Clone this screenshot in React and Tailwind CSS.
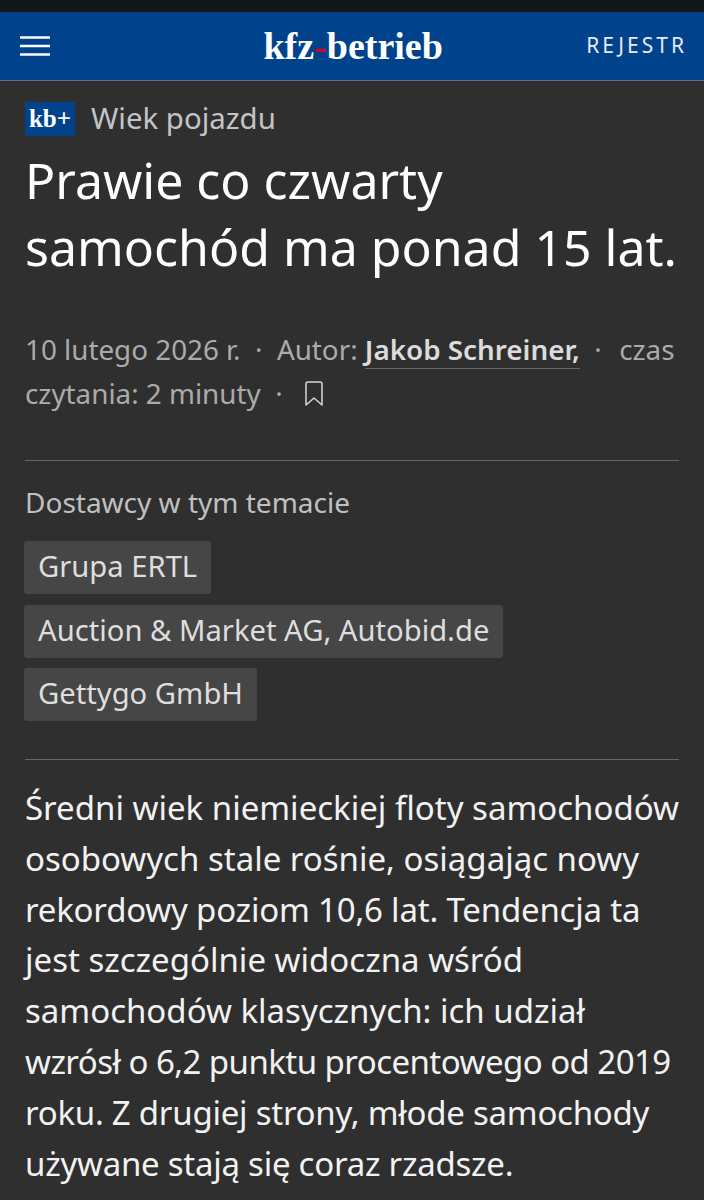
const lines = [
  ["Średni wiek niemieckiej floty samochodów", ""],
  ["osobowych stale rośnie, osiągając nowy", ""],
  ["rekordowy poziom 10,6 lat. Tendencja ta", "tracking-[-0.2px]"],
  ["jest szczególnie widoczna wśród", ""],
  ["samochodów klasycznych: ich udział", ""],
  ["wzrósł o 6,2 punktu procentowego od 2019", "tracking-[-0.55px]"],
  ["roku. Z drugiej strony, młode samochody", "tracking-[-0.25px]"],
  ["używane stają się coraz rzadsze.", "tracking-[-0.25px]"],
];

export default function App() {
  return (
    <div className="w-[704px] h-[1200px] overflow-hidden bg-[#2f2f2f] font-['Noto_Sans',sans-serif]">
      <div className="h-[12px] bg-[#11161a]" />
      <header className="h-[69px] bg-[#00438c] border-b border-[#5f6f85] flex items-center justify-between pl-[20px] pr-[18px]">
        <svg width="30" height="20" viewBox="0 0 30 20" className="shrink-0"><path d="M0 1.5h30M0 10h30M0 18.5h30" stroke="#fff" strokeWidth="2.6" /></svg>
        <div className="font-['Liberation_Serif',serif] font-bold text-[38px] text-white leading-none ml-[70px]">kfz<span className="text-[#d4002a]">-</span>betrieb</div>
        <div className="text-[21px] tracking-[3px] text-[#e6ecf4] mr-[-1px]">REJESTR</div>
      </header>
      <main className="px-[25px]">
        <div className="flex items-center gap-[16px] mt-[20px] h-[36px]">
          <span className="bg-[#00438c] text-white font-['Liberation_Serif',serif] font-bold text-[25px] leading-[33px] h-[34px] w-[50px] text-center">kb+</span>
          <span className="text-[#c4c4c4] text-[29.4px] leading-none">Wiek pojazdu</span>
        </div>
        <h1 className="text-white text-[50px] leading-[67px] mt-[10px]">Prawie co czwarty samochód ma ponad 15 lat.</h1>
        <div className="text-[#ababab] text-[27.8px] leading-[44px] mt-[46px]">
          10 lutego 2026 r. &nbsp;·&nbsp; Autor: <span className="text-[#dcdcdc] font-semibold border-b border-[#666]">Jakob Schreiner,</span> &nbsp;·&nbsp; <span className="ml-[3px]">czas</span> czytania: 2 minuty &nbsp;·&nbsp; <svg className="inline-block align-[-2px] ml-[7px]" width="20" height="25" viewBox="0 0 20 25" fill="none" stroke="#d8d8d8" strokeWidth="1.5" strokeLinejoin="round"><path d="M2 3a2 2 0 0 1 2-2h12a2 2 0 0 1 2 2v21l-8-7-8 7z" /></svg>
        </div>
        <div className="border-t border-[#666] mt-[45px] pt-[23px]">
          <div className="text-[#c0c0c0] text-[28px] leading-[36px]">Dostawcy w tym temacie</div>
          <div className="flex flex-col items-start gap-[10.5px] mt-[21px]">
            {["Grupa ERTL", "Auction & Market AG, Autobid.de", "Gettygo GmbH"].map((t) => (
              <span key={t} className="bg-[#464646] text-[#dedede] text-[29.2px] leading-[51px] h-[53px] px-[14px] ml-[-1px] rounded-[3px]">{t}</span>
            ))}
          </div>
        </div>
        <div className="border-t border-[#666] mt-[38px] pt-[23px]">
          <p className="text-[#f2f2f2] text-[33px] leading-[50.8px]">
            {lines.map(([t, c]) => (
              <span key={t} className={`block whitespace-nowrap ${c}`}>{t}</span>
            ))}
          </p>
        </div>
      </main>
    </div>
  );
}
